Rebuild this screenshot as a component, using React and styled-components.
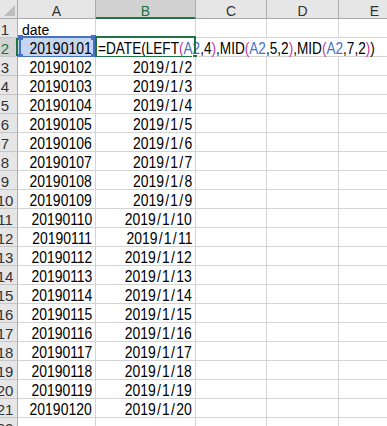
import styled, { createGlobalStyle, css } from "styled-components";

const GlobalStyle = createGlobalStyle`
  html, body {
    margin: 0;
    padding: 0;
    background: #fff;
    overflow: hidden;
  }
`;

const GREEN = "#217346";
const BLUE = "#4472c4";

const Sheet = styled.div`
  width: 387px;
  height: 426px;
  overflow: hidden;
  display: grid;
  grid-template-columns: 18px 78px 100px 71px 72px 72px;
  grid-auto-rows: 19px;
  font-family: "Liberation Sans", Arial, sans-serif;
  color: #000;
`;

const Corner = styled.div`
  box-sizing: border-box;
  background: #e6e6e6;
  border-right: 1px solid #ababab;
  border-bottom: 1px solid #ababab;
  display: flex;
  align-items: flex-end;
  justify-content: flex-end;
  padding: 0 2px 2px 0;
`;

const CornerTriangle = styled.span`
  width: 0;
  height: 0;
  border-left: 11px solid transparent;
  border-bottom: 11px solid #bdbdbd;
`;

const ColHead = styled.div`
  box-sizing: border-box;
  background: #e6e6e6;
  border-right: 1px solid #ababab;
  border-bottom: 1px solid #ababab;
  display: flex;
  align-items: flex-end;
  justify-content: center;
  font-size: 14px;
  line-height: 14px;
  color: #333;
  ${(p) =>
    p.$active &&
    css`
      background: #d2d2d2;
      color: ${GREEN};
      border-bottom-color: ${GREEN};
      box-shadow: inset 0 -1px 0 ${GREEN};
    `}
`;

const RowHead = styled.div`
  box-sizing: border-box;
  background: #e6e6e6;
  border-right: 1px solid #ababab;
  border-bottom: 1px solid #c6c6c6;
  display: flex;
  align-items: flex-end;
  justify-content: center;
  padding-right: 7px;
  overflow: hidden;
  white-space: nowrap;
  font-size: 15px;
  line-height: 15px;
  color: #333;
  ${(p) =>
    p.$active &&
    css`
      background: #d2d2d2;
      color: ${GREEN};
      border-right-color: ${GREEN};
      box-shadow: inset -1px 0 0 ${GREEN};
    `}
`;

const Cell = styled.div`
  position: relative;
  box-sizing: border-box;
  border-right: 1px solid #d4d4d4;
  border-bottom: 1px solid #d4d4d4;
  background: ${(p) => (p.$ref ? "#c6d6ef" : "#fff")};
  display: flex;
  align-items: flex-end;
  justify-content: ${(p) => (p.$right ? "flex-end" : "flex-start")};
  padding: 0 3px;
  white-space: nowrap;
  font-size: 14px;
  line-height: 14px;
  ${(p) =>
    p.$label &&
    css`
      padding-left: 4px;
    `}
`;

/* the sheet font has tall, narrow figures: a squeezed Liberation Sans */
const Value = styled.span`
  display: inline-block;
  font-size: 17px;
  line-height: 14px;
  transform: scaleX(${(p) => p.$squeeze || 0.82});
  transform-origin: ${(p) => (p.$right ? "right" : "left")} bottom;
`;

const Slash = styled.span`
  margin: 0 1.5px;
`;

const FormulaCell = styled(Cell)`
  grid-column: span 4;
  border-right: none;
  padding-left: 2px;
`;

const RefBox = styled.div`
  position: absolute;
  left: 1px;
  top: -2px;
  width: 76px;
  height: 22px;
  box-sizing: border-box;
  border: 2px solid ${BLUE};
`;

const Handle = styled.span`
  position: absolute;
  width: 5px;
  height: 5px;
  background: ${BLUE};
  ${(p) => (p.$top ? "top: -3px;" : "bottom: -3px;")}
  ${(p) => (p.$left ? "left: -3px;" : "right: -3px;")}
`;

const ActiveBox = styled.div`
  position: absolute;
  left: -1px;
  top: -2px;
  width: 101px;
  height: 22px;
  box-sizing: border-box;
  border: 2px solid ${GREEN};
`;

const FillHandle = styled.span`
  position: absolute;
  right: -4px;
  bottom: -4px;
  width: 4px;
  height: 4px;
  background: ${GREEN};
  border: 1px solid #fff;
`;

const Ref = styled.span`
  color: ${BLUE};
`;

const Paren = styled.span`
  color: #c0399b;
`;

const COLS = ["A", "B", "C", "D", "E"];
const ROWS = Array.from({ length: 22 }, (_, i) => i + 1);

function Formula() {
  return (
    <Value $squeeze={0.8}>
      =DATE(LEFT<Paren>(</Paren>
      <Ref>A2</Ref>,4<Paren>)</Paren>,MID<Paren>(</Paren>
      <Ref>A2</Ref>,5,2<Paren>)</Paren>,MID<Paren>(</Paren>
      <Ref>A2</Ref>,7,2<Paren>)</Paren>)
    </Value>
  );
}

function DateValue({ day }) {
  return (
    <Value $right>
      2019<Slash>/</Slash>1<Slash>/</Slash>
      {day}
    </Value>
  );
}

function Row({ n }) {
  const head = <RowHead $active={n === 2}>{n}</RowHead>;
  if (n === 1) {
    return (
      <>
        {head}
        <Cell $label>date</Cell>
        <Cell />
        <Cell />
        <Cell />
        <Cell />
      </>
    );
  }
  if (n === 2) {
    return (
      <>
        {head}
        <Cell $right $ref>
          <Value $right>20190101</Value>
          <RefBox>
            <Handle $top $left />
            <Handle $top />
            <Handle $left />
            <Handle />
          </RefBox>
        </Cell>
        <FormulaCell>
          <Formula />
          <ActiveBox>
            <FillHandle />
          </ActiveBox>
        </FormulaCell>
      </>
    );
  }
  if (n > 21) {
    return (
      <>
        {head}
        <Cell />
        <Cell />
        <Cell />
        <Cell />
        <Cell />
      </>
    );
  }
  const day = n - 1;
  return (
    <>
      {head}
      <Cell $right>
        <Value $right>{20190100 + day}</Value>
      </Cell>
      <Cell $right>
        <DateValue day={day} />
      </Cell>
      <Cell />
      <Cell />
      <Cell />
    </>
  );
}

export default function App() {
  return (
    <>
      <GlobalStyle />
      <Sheet>
        <Corner>
          <CornerTriangle />
        </Corner>
        {COLS.map((c) => (
          <ColHead key={c} $active={c === "B"}>
            {c}
          </ColHead>
        ))}
        {ROWS.map((n) => (
          <Row key={n} n={n} />
        ))}
      </Sheet>
    </>
  );
}
